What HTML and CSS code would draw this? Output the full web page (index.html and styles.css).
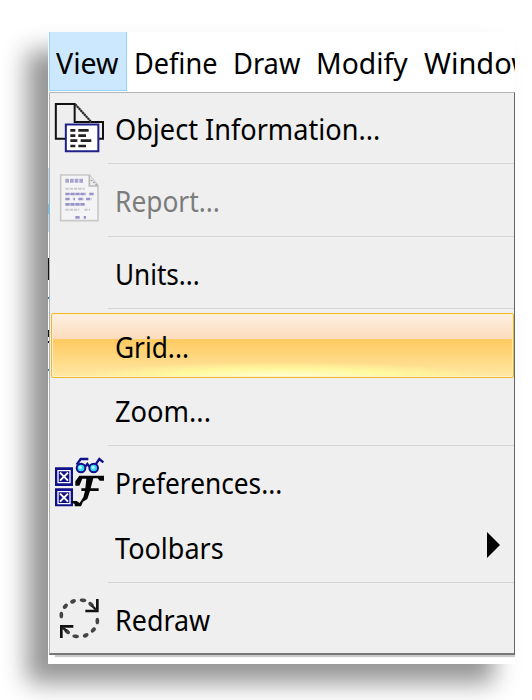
FILE: index.html
```html
<!DOCTYPE html>
<html lang="en">
<head>
<meta charset="utf-8">
<title>View menu</title>
<link rel="stylesheet" href="styles.css">
</head>
<body>
<main class="window">
  <nav class="menubar">
    <span class="tab active"><span class="label t-view">View</span></span>
    <span class="tab define"><span class="label t-define">Define</span></span>
    <span class="tab draw"><span class="label t-draw">Draw</span></span>
    <span class="tab modify"><span class="label t-modify">Modify</span></span>
    <span class="tab win"><span class="label t-win">Window</span></span>
  </nav>
  <section class="menu">
    <div class="item">
      <svg class="icon" viewBox="45 37 147 147">
        <path d="M47.500 40H105L152 92H189V144H47.500Z" fill="#eee"/>
        <path d="M152 94H189V144H47.500V40H107" fill="none" stroke="#111" stroke-width="6"/>
        <path d="M104 40V94H152" fill="none" stroke="#111" stroke-width="6"/>
        <path d="M106 41L152 92" stroke="#777" stroke-width="6"/>
        <path d="M106 41L152 92" stroke="#222" stroke-width="6" stroke-dasharray="5 3"/>
        <path d="M77.500 101.500H175V182H77.500Z" fill="#fff" stroke="#20208c" stroke-width="6"/>
        <path d="M91 119H106M115 119H146M91 135H106M115 135H138M91 150H112M122 150H154M91 166H106M115 166H138" stroke="#222" stroke-width="8"/>
      </svg>
      <span class="label l-object">Object Information...</span>
    </div>
    <div class="sep"></div>
    <div class="item disabled">
      <svg class="icon" viewBox="45 50 147 147">
        <path d="M62 47H148L174 79V184H62Z" fill="#f4f4f6" stroke="#c9c9c9" stroke-width="5"/>
        <path d="M148 48V80H174" fill="#eee" stroke="#b9b9b9" stroke-width="5"/>
        <path d="M153 62L174 80" stroke="#999" stroke-width="4" stroke-dasharray="5 4"/>
        <path d="M76 64H132" stroke="#a7a5cf" stroke-width="12" stroke-dasharray="11 3"/>
        <path d="M76 88H134M76 151H118M133 151H150" stroke="#c9c9c9" stroke-width="6" stroke-dasharray="10 3"/>
        <path d="M76 104H138M148 104H161M76 119H91M100 119H105M115 119H131M138 119H154M76 135H134M106 174H119M131 174H138" stroke="#9694c8" stroke-width="8" stroke-dasharray="13 2"/>
      </svg>
      <span class="label l-report">Report...</span>
    </div>
    <div class="sep"></div>
    <div class="item"><span class="icon"></span><span class="label l-units">Units...</span></div>
    <div class="sep"></div>
    <div class="item selected"><span class="icon"></span><span class="label l-grid">Grid...</span></div>
    <div class="item"><span class="icon"></span><span class="label l-zoom">Zoom...</span></div>
    <div class="sep"></div>
    <div class="item">
      <svg class="icon" viewBox="45 54 147 147">
        <path d="M45 82H99V138H45ZM45 145H99V199H45Z" fill="#10108a"/>
        <path d="M54 92H90V128H54ZM54 155H90V191H54Z" fill="none" stroke="#fff" stroke-width="4"/>
        <path d="M60 98L84 122M84 98L60 122M60 161L84 185M84 161L60 185" stroke="#fff" stroke-width="6"/>
        <path d="M110 74L122 57H145M136 80L142 72L148 80M165 76L178 57L190 67" fill="none" stroke="#10108a" stroke-width="7"/>
        <circle cx="123" cy="84" r="13" fill="#37d5f2" stroke="#10108a" stroke-width="6"/>
        <circle cx="161" cy="84" r="13" fill="#37d5f2" stroke="#10108a" stroke-width="6"/>
        <circle cx="121" cy="82" r="5" fill="#bff"/><circle cx="159" cy="82" r="5" fill="#bff"/>
        <path d="M106 124L118 107H192V122H179L173 115H160L152 145H176V153H150L142 177L129 185L123 199H104V192L95 188V183H110L119 189L130 172L135 153H124V145H136L139 116H127L118 137H106Z" fill="#050505"/>
      </svg>
      <span class="label l-pref">Preferences...</span>
    </div>
    <div class="item">
      <span class="icon"></span><span class="label l-tool">Toolbars</span>
      <svg class="arrow" viewBox="0 0 13 26"><path d="M0 0L13 13L0 26Z"/></svg>
    </div>
    <div class="sep"></div>
    <div class="item">
      <svg class="icon" viewBox="45 47 147 147">
        <g fill="#444">
          <ellipse cx="99" cy="66" rx="9" ry="6" transform="rotate(-25 99 66)"/>
          <ellipse cx="129" cy="63" rx="10" ry="5.500" transform="rotate(8 129 63)"/>
          <ellipse cx="76" cy="81" rx="9" ry="6" transform="rotate(-48 76 81)"/>
          <ellipse cx="64" cy="107" rx="5.500" ry="10"/>
          <ellipse cx="153" cy="75" rx="9" ry="6" transform="rotate(35 153 75)"/>
          <ellipse cx="172" cy="125" rx="5.500" ry="10"/>
          <ellipse cx="160" cy="152" rx="9" ry="6" transform="rotate(-48 160 152)"/>
          <ellipse cx="137" cy="168" rx="9" ry="6" transform="rotate(-25 137 168)"/>
          <ellipse cx="107" cy="171" rx="10" ry="5.500" transform="rotate(8 107 171)"/>
          <ellipse cx="82" cy="157" rx="9" ry="6" transform="rotate(40 82 157)"/>
        </g>
        <path d="M172 59V95H136M64 176V141H100" fill="none" stroke="#111" stroke-width="8"/>
        <path d="M155 78L170 93M66 143L80 155" stroke="#222" stroke-width="7"/>
      </svg>
      <span class="label l-redraw">Redraw</span>
    </div>
  </section>
</main>
</body>
</html>
```
FILE: styles.css
```css
* { box-sizing: border-box; }
body {
  margin: 0;
  width: 532px;
  height: 700px;
  padding: 32px 0 0 48px;
  overflow: hidden;
  background: #fff;
  font-family: "Noto Sans", "Open Sans", sans-serif;
  font-size: 29px;
  color: #000;
}
.window {
  width: 467px;
  height: 632px;
  padding-left: 1px;
  background:
    linear-gradient(#5bc8ff, #5bc8ff) 0 172px / 1px 10px no-repeat,
    linear-gradient(#111, #111) 0 226px / 1px 22px no-repeat,
    linear-gradient(#1683d8, #1683d8) 0 265px / 1px 2px no-repeat,
    linear-gradient(#111, #111) 0 298px / 1px 7px no-repeat,
    linear-gradient(#111, #111) 0 309px / 1px 2px no-repeat,
    linear-gradient(#1683d8, #1683d8) 0 337px / 1px 2px no-repeat,
    linear-gradient(#b9dcf5, #b9dcf5) 0 136px / 1px 64px no-repeat,
    #fff;
  box-shadow: -21px 19px 23px rgba(0, 0, 0, .42);
}
.menubar {
  display: flex;
  height: 60px;
  overflow: hidden;
  white-space: nowrap;
}
.tab { flex: none; height: 59px; line-height: 62px; }
.tab .label { line-height: 62px; }
.active {
  width: 78px;
  padding-left: 6px;
  background: #cce8ff;
  border: solid #99d1ff;
  border-width: 0 1px 1px;
}
.define { width: 99px; padding-left: 7px; }
.draw { width: 83px; padding-left: 7px; }
.modify { width: 107px; padding-left: 7px; }
.win { padding-left: 8px; }
.menu {
  width: 466px;
  height: 563px;
  padding: 2.600px 0 0 1px;
  background: #efefef;
  border: 1px solid #b5b5b5;
  border-left-color: #b0b0b0;
  border-right: 1px solid #666;
  border-bottom: 2px solid #777;
  box-shadow: 5px 3px 1px -1px #ccc;
  clip-path: inset(0 0 -4px 0);
}
.item {
  display: flex;
  align-items: center;
  height: 64.4px;
  padding-left: 4px;
  white-space: nowrap;
}
.icon { flex: none; width: 49px; height: 49px; margin-right: 11px; overflow: visible; }
.disabled { color: #7c7c7c; }
/* Condensed letterforms, with the fit set for each caption. */
.label { display: inline-block; line-height: 40px; transform-origin: 0 50%; }
.item .label { margin-top: 2px; }
.t-view { transform: scaleX(.985); }
.t-define { transform: scaleX(.935); }
.t-draw { transform: scaleX(.94); }
.t-modify { transform: scaleX(.975); }
.l-object { transform: scaleX(.935); }
.l-report { transform: scaleX(.908); }
.l-units { transform: scaleX(.9); }
.l-grid { transform: scaleX(.905); }
.l-zoom { transform: scaleX(.94); }
.l-pref { transform: scaleX(.905); }
.l-tool { transform: scaleX(.932); }
.l-redraw { transform: scaleX(.927); }
.sep {
  height: 8.2px;
  margin-left: 57px;
  padding-top: 3px;
}
.sep::before { content: ""; display: block; height: 1px; background: #d5d5d5; }
.selected {
  padding-left: 3px;
  border: 1px solid #f2b72d;
  border-radius: 2px;
  box-shadow: inset 0 0 0 1px #fff0c8;
  background:
    radial-gradient(ellipse 210px 15px at 50% 100%, #ffffd8 0, #ffff9ec0 55%, #ffff9e00 100%),
    linear-gradient(#fdf0e4 0, #fcdcbb 40%, #ffca60 40.5%, #ffd780 68%, #ffe9a4 100%);
}
.arrow { width: 13px; height: 26px; margin: -3px 14px 0 auto; }
```
